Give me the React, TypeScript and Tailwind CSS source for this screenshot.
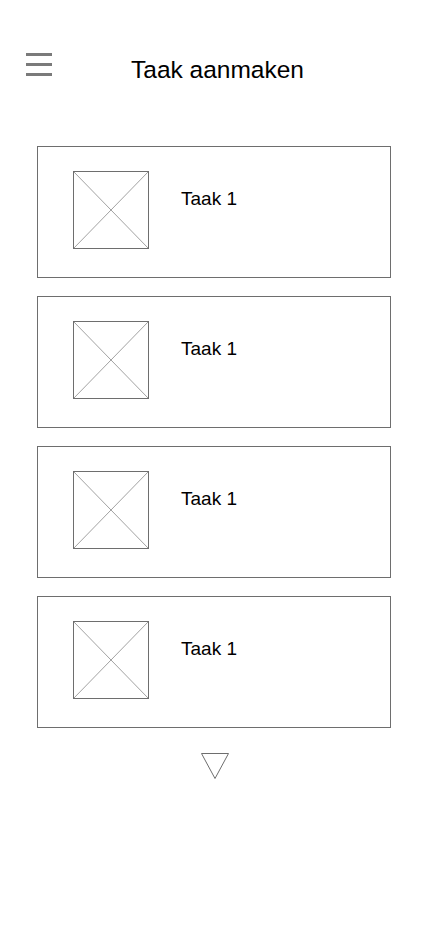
import React from "react";

function ImgPlaceholder() {
  return (
    <div className="relative w-[76px] h-[78px] border border-[#6e6e6e] shrink-0">
      <svg className="absolute inset-0" width="74" height="76" viewBox="0 0 74 76">
        <line x1="0" y1="0" x2="74" y2="76" stroke="#8a8a8a" strokeWidth="0.8" />
        <line x1="74" y1="0" x2="0" y2="76" stroke="#8a8a8a" strokeWidth="0.8" />
      </svg>
    </div>
  );
}

function Card() {
  return (
    <div className="w-[354px] h-[132px] border border-[#6e6e6e] flex items-start pl-[35px] pt-[24px]">
      <ImgPlaceholder />
      <div className="ml-[32px] mt-[19px] text-[19px] leading-[18px] text-black">Taak 1</div>
    </div>
  );
}

export default function App() {
  return (
    <div
      className="w-[428px] h-[926px] bg-white"
      style={{ fontFamily: '"Liberation Sans", Arial, sans-serif' }}
    >
      <div className="flex items-start pl-[26px] pt-[53px]">
        <div className="w-[26px] h-[23px] flex flex-col justify-between">
          <div className="h-[3px] bg-[#7a7a7a]" />
          <div className="h-[3px] bg-[#7a7a7a]" />
          <div className="h-[3px] bg-[#7a7a7a]" />
        </div>
        <div className="ml-[79px] mt-[5px] text-[24.5px] leading-[24px] text-black">Taak aanmaken</div>
      </div>
      <div className="mt-[64px] flex flex-col gap-[18px] pl-[37px]">
        <Card />
        <Card />
        <Card />
        <Card />
      </div>
      <div className="flex justify-center pl-[2px] mt-[24px]">
        <svg width="30" height="28" viewBox="0 0 30 28">
          <polygon points="1.5,1.5 28.5,1.5 15,26.5" fill="none" stroke="#6e6e6e" strokeWidth="1" />
        </svg>
      </div>
    </div>
  );
}
